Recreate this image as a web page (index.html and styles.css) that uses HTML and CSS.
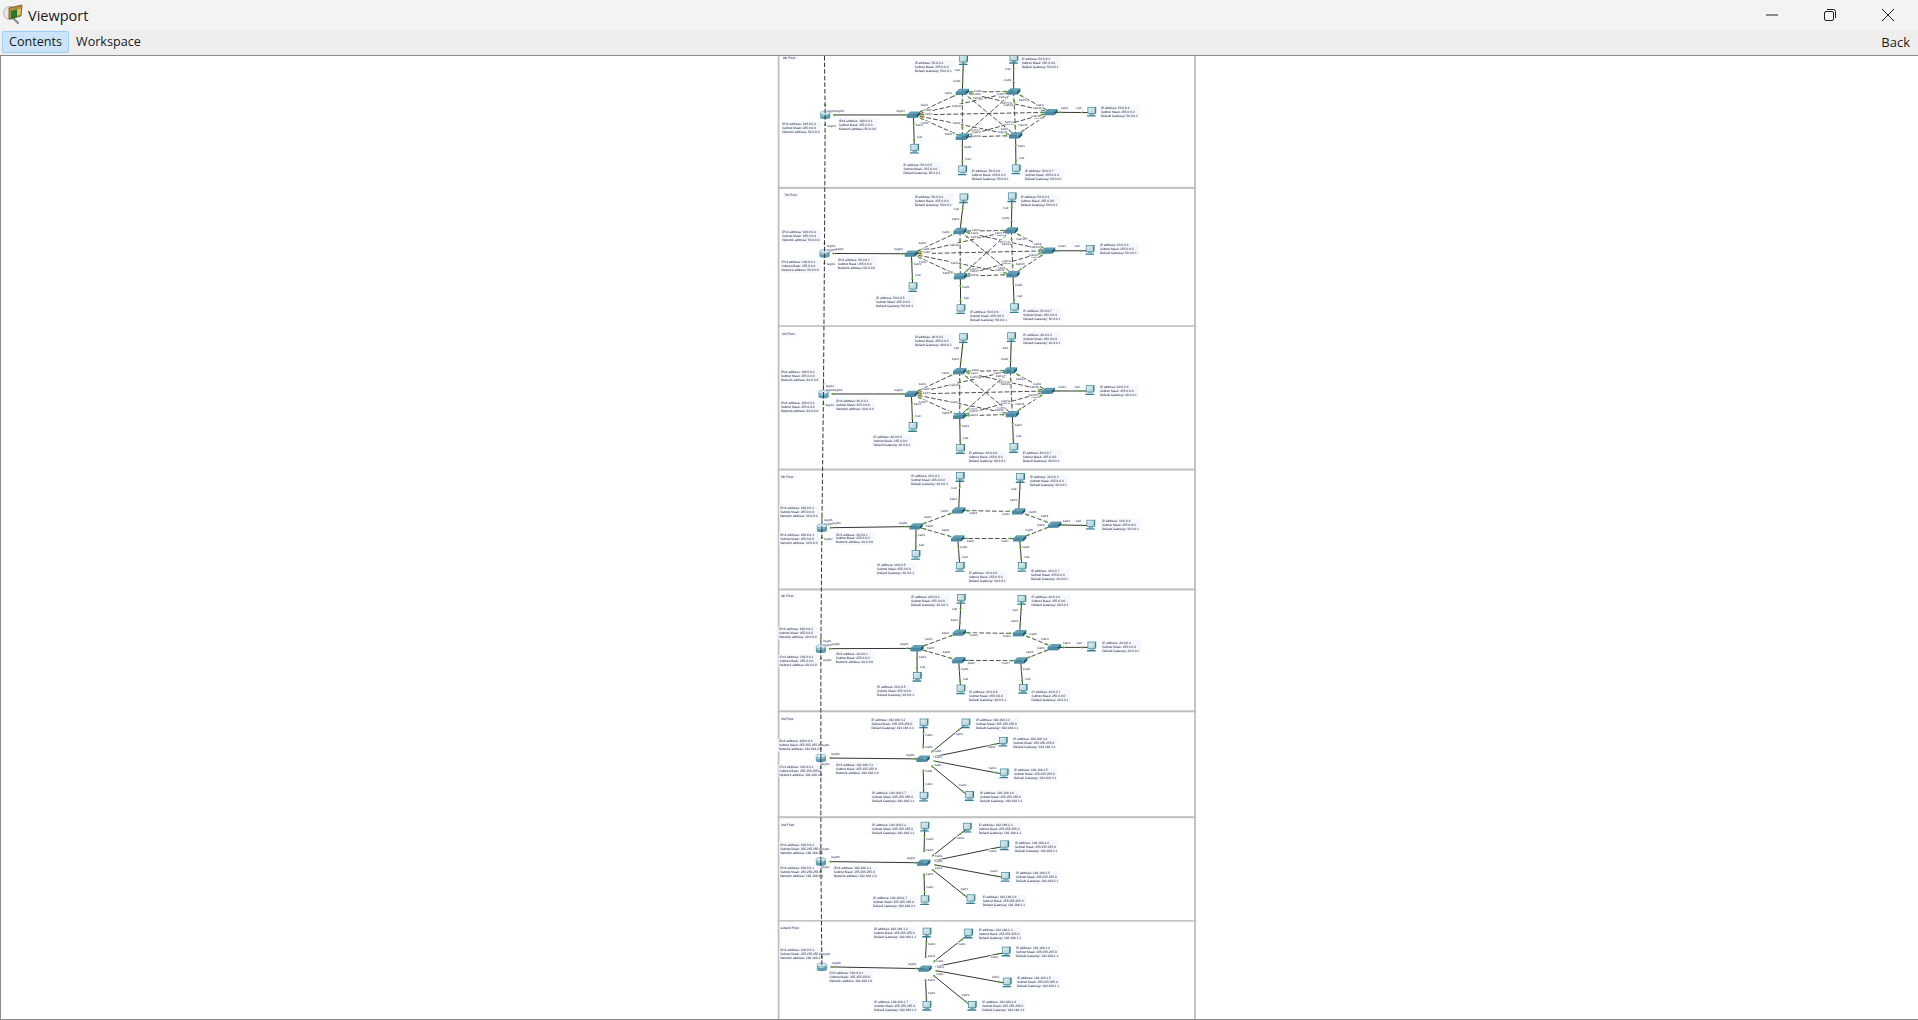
FILE: index.html
```html
<!DOCTYPE html>
<html>
<head>
	<title>Viewport</title>
	<link rel="stylesheet" href="styles.css">
</head>
<body>
	<div class="titlebar">
		<svg class="app-icon" viewBox="0 0 22 24" width="22" height="24">
			<circle cx="8" cy="10" r="6.5" fill="#e6e6e6" stroke="#b5b5b5"/>
			<path d="M11 15l5 5" stroke="#8f8f8f" stroke-width="2.4" stroke-linecap="round"/>
			<path d="M7 5l13-3-1 11-12 3z" fill="#b98d3c" stroke="#6d5220" stroke-width=".8"/>
			<path d="M9 8l6-1.4v8L9 16z" fill="#1f7a2e"/>
			<path d="M15 6.5l4-1-.5 6-3.500 1z" fill="#e0c170"/>
		</svg>
		<span class="app-title">Viewport</span>
		<div class="window-buttons">
			<svg viewBox="0 0 12 12" width="12" height="12"><path d="M0 6h12" stroke="#222" stroke-width="1"/></svg>
			<svg viewBox="0 0 12 12" width="12" height="12"><rect x=".5" y="2.500" width="9" height="9" rx="1.500" fill="none" stroke="#222"/><path d="M3 .5h6.500a2 2 0 0 1 2 2V9" fill="none" stroke="#222"/></svg>
			<svg viewBox="0 0 12 12" width="12" height="12"><path d="M0 0l12 12M12 0L0 12" stroke="#222" stroke-width="1"/></svg>
		</div>
	</div>
	<div class="tabbar">
		<div class="tab tab-active">Contents</div>
		<div class="tab">Workspace</div>
		<div class="back">Back</div>
	</div>
	<div class="viewport">
		<svg id="sheet" class="sheet" viewBox="777 55 420 965" width="420" height="964"></svg>
	</div>
	<script src="app.js"></script>
</body>
</html>
```

FILE: styles.css
```css
html, body {
	height: 100%;
}

body {
	margin: 0;
	padding: 0;
	display: flex;
	flex-direction: column;
	overflow: hidden;
	font-family: "Open Sans", "Noto Sans", sans-serif;
	color: #1a1a1a;
	background-color: #F0F0F0;
}

.titlebar {
	height: 30px;
	display: flex;
	align-items: center;
	background-color: #F3F3F3;
}

.app-icon {
	margin: 0 4px 0 2px;
}

.app-title {
	font-size: 14.5px;
}

.window-buttons {
	margin-left: auto;
	margin-right: 24px;
	display: flex;
	gap: 46px;
}

.tabbar {
	height: 25px;
	display: flex;
	align-items: center;
	box-sizing: border-box;
	padding: 1px 8px 2px 2px;
	background-color: #EEEEEE;
}

.tab {
	font-size: 12.6px;
	padding: 0 6px;
	line-height: 20px;
	border: 1px solid transparent;
	border-radius: 2px;
}

.tab-active {
	background-color: #CCE4F7;
	border-color: #9CD0F5;
}

.back {
	margin-left: auto;
	font-size: 13px;
}

.viewport {
	flex: 1;
	min-height: 0;
	box-sizing: border-box;
	border-top: 1px solid #8A8A8A;
	border-left: 1px solid #8A8A8A;
	border-bottom: 1px solid #8A8A8A;
	background-color: #FFFFFF;
	overflow: hidden;
}

.sheet {
	display: block;
	margin-left: 776px;
	filter: blur(0.3px);
}

.note-box {
	fill: #F6F8FF;
}

.note-text {
	font-family: "Liberation Sans", sans-serif;
	font-size: 9.6px;
	fill: #2b2b3a;
	text-rendering: geometricPrecision;
}

.port-box {
	fill: #F8F9FF;
}

.port-text {
	font-family: "Liberation Sans", sans-serif;
	font-size: 8.6px;
	fill: #3a3a4a;
	text-anchor: middle;
	text-rendering: geometricPrecision;
}

.cable {
	stroke: #333333;
	stroke-width: 3;
	fill: none;
}

.cable-dashed {
	stroke-width: 2.6;
	stroke-dasharray: 14 6;
}

.trunk {
	stroke: #333333;
	stroke-width: 1;
	stroke-dasharray: 4.6 2;
	fill: none;
}

.light-up {
	fill: #5CB531;
}

.light-warn {
	fill: #E8801A;
}

.sheet-edge {
	fill: #BFBFBF;
}
```

FILE: app.js
```js
// Each floor is written in the units of a 3x crop: x from 770, y from the floor's own y0.
var MESH = [[0,1],[0,2],[0,3],[0,4],[0,5],[1,2],[1,3],[1,4],[1,5],[2,3],[2,4],[2,5],[3,4],[3,5],[4,5]];
var RING = [[0,1],[1,2],[2,3],[3,5],[5,4],[4,0]];

var floors = [
	{ y0: 50, title: "8th Floor", titleAt: [38, 18], net: "50.0.0", mask: "255.0.0.0", kind: "mesh", topTrunk: false,
		router: [165, 192], routerNotes: [[36, 215], [206, 204]],
		sw: [[430, 192], [577, 123], [731, 122], [843, 184], [577, 258], [737, 254]],
		pc: [[580, 30, 1], [731, 26, 2], [965, 185, 3], [433, 296, 0], [577, 361, 4], [738, 358, 5]],
		notes: [[434, 30], [755, 20], [993, 166], [400, 337], [605, 355], [765, 355]] },
	{ y0: 50, title: "7th Floor", titleAt: [42, 430], net: "50.0.0", mask: "255.0.0.0", kind: "mesh", topTrunk: true,
		router: [163, 608], routerNotes: [[36, 540], [34, 630], [203, 622]],
		sw: [[424, 609], [570, 541], [724, 539], [836, 600], [571, 677], [729, 671]],
		pc: [[581, 445, 1], [726, 442, 2], [960, 600, 3], [428, 712, 0], [572, 778, 4], [733, 775, 5]],
		notes: [[434, 433], [752, 433], [990, 579], [318, 736], [600, 778], [760, 775]] },
	{ y0: 320, title: "6th Floor", titleAt: [36, 38], net: "40.0.0", mask: "255.0.0.0", kind: "mesh", topTrunk: true,
		router: [160, 220], routerNotes: [[32, 150], [32, 243], [198, 235]],
		sw: [[424, 220], [569, 152], [721, 150], [835, 211], [569, 286], [727, 281]],
		pc: [[580, 55, 1], [724, 52, 2], [960, 211, 3], [428, 322, 0], [571, 388, 4], [731, 385, 5]],
		notes: [[434, 43], [760, 37], [990, 195], [310, 345], [596, 393], [758, 391]] },
	{ y0: 320, title: "5th Floor", titleAt: [32, 467], net: "30.0.0", mask: "255.0.0.0", kind: "ring", topTrunk: true,
		router: [155, 622], routerNotes: [[30, 557], [30, 640], [197, 637]],
		sw: [[438, 618], [566, 570], [746, 573], [854, 613], [563, 654], [749, 654]],
		pc: [[570, 472, 1], [751, 475, 2], [962, 615, 3], [437, 706, 0], [570, 742, 4], [756, 742, 5]],
		notes: [[423, 462], [780, 465], [996, 597], [321, 730], [596, 753], [783, 747]] },
	{ y0: 460, title: "4th Floor", titleAt: [32, 404], net: "20.0.0", mask: "255.0.0.0", kind: "ring", topTrunk: true,
		router: [152, 565], routerNotes: [[27, 502], [28, 585], [197, 577]],
		sw: [[441, 564], [568, 517], [749, 519], [853, 561], [566, 600], [752, 601]],
		pc: [[573, 418, 1], [755, 421, 2], [965, 561, 3], [441, 652, 0], [572, 690, 4], [759, 688, 5]],
		notes: [[423, 405], [785, 405], [997, 543], [321, 675], [597, 690], [785, 690]] },
	{ y0: 700, title: "3rd Floor", titleAt: [32, 53], net: "192.168.3", mask: "255.255.255.0", kind: "star", topTrunk: true,
		router: [152, 173], routerNotes: [[26, 118], [28, 196], [197, 188]],
		sw: [[459, 176]],
		pc: [[461, 72], [587, 72], [699, 127], [702, 222], [598, 290], [461, 292]],
		notes: [[304, 55], [618, 55], [730, 112], [732, 205], [630, 272], [306, 272]] },
	{ y0: 700, title: "2nd Floor", titleAt: [32, 370], net: "192.168.2", mask: "255.255.255.0", kind: "star", topTrunk: true,
		router: [152, 484], routerNotes: [[30, 428], [30, 498], [191, 500]],
		sw: [[461, 488]],
		pc: [[464, 382], [591, 385], [703, 438], [706, 533], [602, 600], [464, 603]],
		notes: [[306, 370], [626, 368], [735, 422], [738, 515], [638, 587], [309, 590]] },
	{ y0: 700, title: "Ground Floor", titleAt: [30, 680], net: "192.168.1", mask: "255.255.255.0", kind: "star", topTrunk: true,
		bottomTrunk: false,
		router: [155, 800], routerNotes: [[30, 746], [178, 813]],
		sw: [[465, 806]],
		pc: [[470, 700], [595, 703], [708, 757], [711, 850], [606, 920], [470, 920]],
		notes: [[311, 682], [626, 685], [738, 740], [741, 830], [637, 902], [312, 902]] }
];

var RULES = [[186, 2], [324.5, 1.6], [468, 2], [588, 2], [710, 2], [816, 2], [920, 1.5]];

function along(a, b, d) {
	var dx = b[0] - a[0], dy = b[1] - a[1];
	var len = Math.sqrt(dx * dx + dy * dy) || 1;
	return { x: a[0] + dx / len * d, y: a[1] + dy / len * d, ux: dx / len, uy: dy / len, len: len };
}

function light(a, b, d, warn) {
	var p = along(a, b, d);
	var cls = warn ? "light-warn" : "light-up";
	var s = 4;
	var pts = [
		[p.x + p.ux * s, p.y + p.uy * s],
		[p.x - p.ux * s - p.uy * s, p.y - p.uy * s + p.ux * s],
		[p.x - p.ux * s + p.uy * s, p.y - p.uy * s - p.ux * s]
	];
	return '<polygon class="' + cls + '" points="' + pts.map(function (q) { return q[0].toFixed(1) + "," + q[1].toFixed(1); }).join(" ") + '"/>';
}

function port(x, y, name) {
	return '<rect class="port-box" x="' + (x - 13) + '" y="' + (y - 8) + '" width="26" height="11"/>' +
		'<text class="port-text" x="' + x + '" y="' + y + '">' + name + "</text>";
}

function portNear(a, b, d, side, name) {
	var p = along(a, b, d);
	return port(Math.round(p.x - p.uy * 17 * side), Math.round(p.y + p.ux * 10 * side), name);
}

function link(a, b, dashed, opts) {
	opts = opts || {};
	var start = along(a, b, opts.skip || 0);
	var html = '<line class="cable' + (dashed ? " cable-dashed" : "") + '" x1="' + start.x.toFixed(1) + '" y1="' + start.y.toFixed(1) +
		'" x2="' + b[0] + '" y2="' + b[1] + '"/>';
	var len = start.len;
	html += light(a, b, opts.skip ? opts.skip + 6 : 30, opts.warn);
	html += light(b, a, opts.far || 30);
	return { line: html, ports: portNear(a, b, Math.min(44, len / 3), opts.side || 1, opts.nameA || "Fa0/1") +
		portNear(b, a, Math.min(38, len / 3), opts.side ? -opts.side : -1, opts.nameB || "Fa0/2") };
}

function note(x, y, lines) {
	var longest = 0;
	lines.forEach(function (l) { if (l.length > longest) longest = l.length; });
	var html = '<rect class="note-box" x="' + (x - 3) + '" y="' + (y - 3) + '" width="' + (longest * 4.55 + 6) + '" height="39"/>';
	lines.forEach(function (l, i) {
		html += '<text class="note-text" x="' + x + '" y="' + (y + 8 + i * 12) + '">' + l + "</text>";
	});
	return html;
}

function pcLines(f, i) {
	return ["IP address: " + f.net + "." + (i + 2), "Subnet Mask: " + f.mask, "Default Gateway: " + f.net + ".1"];
}

function routerLines(f, i) {
	var host = i === 0 ? "100.0.0.2" : i === 1 ? "100.0.0.1" : f.net + ".1";
	return ["IPv4 address: " + host, "Subnet Mask: " + f.mask, "Network address: " + f.net + ".0"];
}

function drawFloor(f) {
	var lines = "", ports = "", nodes = "", notes = "";
	var add = function (r) { lines += r.line; ports += r.ports; };

	if (f.kind === "star") {
		f.pc.forEach(function (p, i) {
			add(link(f.sw[0], p, false, { skip: 32, far: 28, side: i < 3 ? 1 : -1 }));
		});
		add(link(f.router, f.sw[0], false, { skip: 26, far: 28, side: -1, nameA: "Gig0/0", nameB: "Gig0/1" }));
		ports += port(f.router[0] + 14, f.router[1] - 36, "Gig0/1");
		if (f.bottomTrunk !== false) ports += port(f.router[0] + 14, f.router[1] + 20, "Gig0/2");
	} else {
		var pairs = f.kind === "mesh" ? MESH : RING;
		pairs.forEach(function (pair, i) {
			var warn = f.kind === "mesh" && pair[0] === 0 && (pair[1] === 2 || pair[1] === 5);
			add(link(f.sw[pair[0]], f.sw[pair[1]], true, { side: i % 2 ? 1 : -1, warn: warn, nameA: "Fa0/" + (i + 3), nameB: "Fa0/" + (i + 2) }));
		});
		f.pc.forEach(function (p) {
			add(link(f.sw[p[2]], p, false, { side: -1, far: 30, nameB: "Fa0" }));
		});
		add(link(f.router, f.sw[0], false, { skip: 24, far: 30, side: -1, nameA: "Gig0/0", nameB: "Gig0/1" }));
		if (f.topTrunk) ports += port(f.router[0] + 20, f.router[1] - 20, "Gig0/1");
		ports += port(f.router[0] + 20, f.router[1] - 8, "Gig0/0");
		ports += port(f.router[0] + 20, f.router[1] + 36, "Gig0/2");
	}

	lines += light([f.router[0], f.router[1] - 40], [f.router[0], f.router[1]], 12);
	if (f.bottomTrunk !== false) lines += light([f.router[0], f.router[1] + 40], [f.router[0], f.router[1]], 12);

	f.sw.forEach(function (s) {
		nodes += '<use href="#switch" x="' + s[0] + '" y="' + s[1] + '"/>';
	});
	f.pc.forEach(function (p) {
		nodes += '<use href="#pc" x="' + p[0] + '" y="' + p[1] + '"/>';
	});
	nodes += '<use href="#router" x="' + f.router[0] + '" y="' + f.router[1] + '"/>';

	f.notes.forEach(function (n, i) {
		notes += note(n[0], n[1], pcLines(f, i));
	});
	f.routerNotes.forEach(function (n, i) {
		notes += note(n[0], n[1], routerLines(f, i));
	});
	notes += '<rect class="note-box" x="' + (f.titleAt[0] - 3) + '" y="' + (f.titleAt[1] - 4) + '" width="' + (f.title.length * 4.6 + 6) + '" height="14"/>' +
		'<text class="note-text" x="' + f.titleAt[0] + '" y="' + (f.titleAt[1] + 6) + '">' + f.title + "</text>";

	return '<g transform="translate(770 ' + f.y0 + ') scale(0.33333)">' + notes + lines + ports + nodes + "</g>";
}

function drawTrunk() {
	var pts = [[824.3, 55]];
	floors.forEach(function (f) {
		pts.push([770 + f.router[0] / 3, f.y0 + f.router[1] / 3]);
	});
	var html = "";
	for (var i = 0; i < pts.length - 1; i++) {
		html += '<line class="trunk" x1="' + pts[i][0].toFixed(1) + '" y1="' + pts[i][1].toFixed(1) +
			'" x2="' + pts[i + 1][0].toFixed(1) + '" y2="' + pts[i + 1][1].toFixed(1) + '"/>';
	}
	return html;
}

var defs = '<defs>' +
	'<linearGradient id="pcScreen" x1="0" y1="0" x2="1" y2="1"><stop offset="0" stop-color="#e4f1f3"/><stop offset="1" stop-color="#a9cfd6"/></linearGradient>' +
	'<linearGradient id="routerBody" x1="0" y1="0" x2="1" y2="0"><stop offset="0" stop-color="#5c9fb3"/><stop offset=".45" stop-color="#d9ebef"/><stop offset="1" stop-color="#2f7f98"/></linearGradient>' +
	'<g id="switch">' +
	'<polygon points="-20,-1 -9,-10 20,-10 10,-1" fill="#5f9fb3"/>' +
	'<rect x="-20" y="-1" width="30" height="10" fill="#4a8aa2"/>' +
	'<polygon points="10,-1 20,-10 20,0 10,9" fill="#1f5f78"/>' +
	'</g>' +
	'<g id="pc">' +
	'<rect x="-11" y="-16" width="22" height="19" fill="url(#pcScreen)" stroke="#3f8799" stroke-width="2.2"/>' +
	'<polygon points="11,-16 14,-18 14,1 11,3" fill="#2f7488"/>' +
	'<rect x="-6" y="4" width="14" height="3" fill="#6fa8b7"/>' +
	'<polygon points="-13,8 11,8 14,12 -14,12" fill="#2f7f95"/>' +
	'</g>' +
	'<g id="router">' +
	'<rect x="-15" y="-6" width="30" height="14" fill="url(#routerBody)"/>' +
	'<ellipse cx="0" cy="8" rx="15" ry="5" fill="#5c9fb3"/>' +
	'<ellipse cx="0" cy="-6" rx="15" ry="6" fill="#cfe4ea" stroke="#5c9fb3" stroke-width="1.500"/>' +
	'<path d="M-8 -6h16M0 -10v8" stroke="#ffffff" stroke-width="1.500"/>' +
	'</g>' +
	'</defs>';

var html = defs + '<rect x="777" y="55" width="420" height="965" fill="#FFFFFF"/>';
RULES.forEach(function (r) {
	html += '<rect class="sheet-edge" x="777.5" y="' + r[0] + '" width="419" height="' + r[1] + '"/>';
});
html += '<rect class="sheet-edge" x="777.5" y="55" width="1.8" height="965"/>';
html += '<rect class="sheet-edge" x="1194.3" y="55" width="1.8" height="965"/>';
floors.forEach(function (f) {
	html += drawFloor(f);
});
html += drawTrunk();
document.getElementById("sheet").innerHTML = html;
```
